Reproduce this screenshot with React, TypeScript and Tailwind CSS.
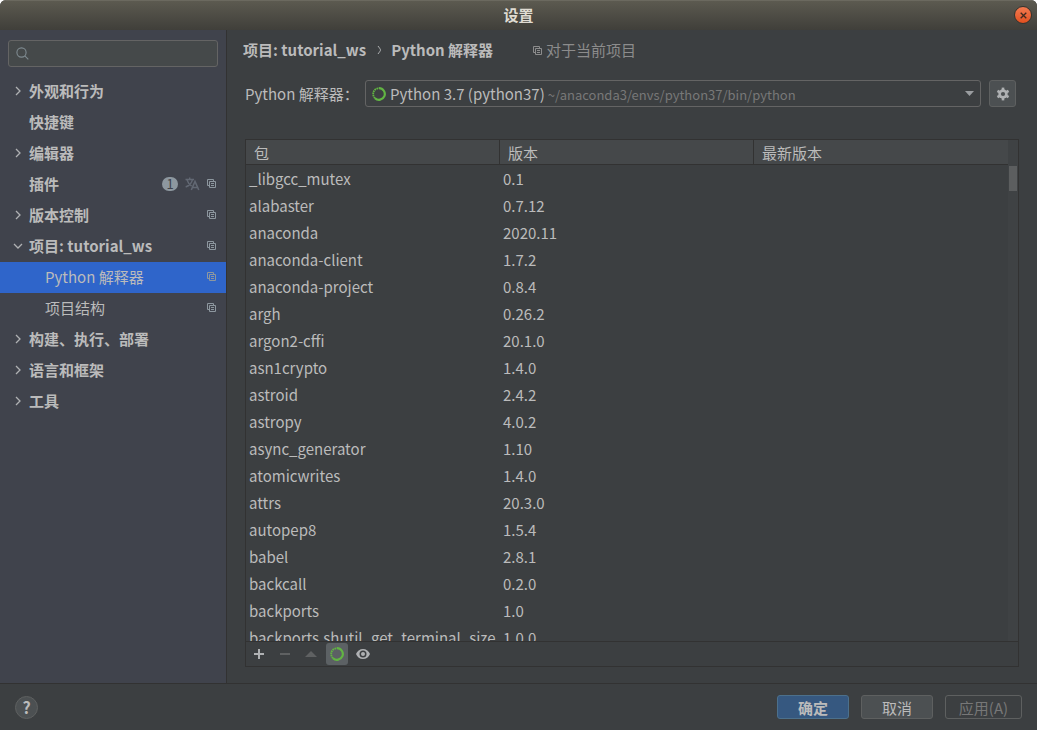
import React from "react";

type NavItem = {
  label: string;
  state?: "closed" | "open";
  child?: boolean;
  scoped?: boolean;
  selected?: boolean;
  plugin?: boolean;
};

const navItems: NavItem[] = [
  { label: "外观和行为", state: "closed" },
  { label: "快捷键" },
  { label: "编辑器", state: "closed" },
  { label: "插件", scoped: true, plugin: true },
  { label: "版本控制", state: "closed", scoped: true },
  { label: "项目: tutorial_ws", state: "open", scoped: true },
  { label: "Python 解释器", child: true, scoped: true, selected: true },
  { label: "项目结构", child: true, scoped: true },
  { label: "构建、执行、部署", state: "closed" },
  { label: "语言和框架", state: "closed" },
  { label: "工具", state: "closed" },
];

const packages: [string, string][] = [
  ["_libgcc_mutex", "0.1"],
  ["alabaster", "0.7.12"],
  ["anaconda", "2020.11"],
  ["anaconda-client", "1.7.2"],
  ["anaconda-project", "0.8.4"],
  ["argh", "0.26.2"],
  ["argon2-cffi", "20.1.0"],
  ["asn1crypto", "1.4.0"],
  ["astroid", "2.4.2"],
  ["astropy", "4.0.2"],
  ["async_generator", "1.10"],
  ["atomicwrites", "1.4.0"],
  ["attrs", "20.3.0"],
  ["autopep8", "1.5.4"],
  ["babel", "2.8.1"],
  ["backcall", "0.2.0"],
  ["backports", "1.0"],
  ["backports.shutil_get_terminal_size", "1.0.0"],
];

function ScopeIcon() {
  return (
    <svg width="9" height="9" viewBox="0 0 9 9" fill="none" stroke="currentColor" className="shrink-0" aria-hidden="true">
      <path d="M2 6.5H0.5V0.5H6.5V2" />
      <path d="M2.5 2.5H8.5V8.5H2.5Z" />
      <path d="M4 4.5H7M4 6.5H7" />
    </svg>
  );
}

function Chevron({ open }: { open?: boolean }) {
  return (
    <svg width="10" height="10" viewBox="0 0 10 10" fill="none" stroke="#afb1b3" strokeWidth="1.3" aria-hidden="true">
      {open ? <path d="M1 3L5 7L9 3" /> : <path d="M3 1L7 5L3 9" />}
    </svg>
  );
}

function TranslateIcon() {
  return (
    <svg width="15" height="14" viewBox="0 0 15 14" fill="none" stroke="#626873" strokeWidth="1.4" aria-hidden="true">
      <path d="M0.5 2.5H9M4.7 0.5V2.5M7.5 2.5C6.7 6 4 8.8 0.7 10M2 2.7C3 6 4.6 8 6.6 9.2" />
      <path d="M6.3 13L10 4.5L13.8 13M7.6 10.5H12.4" strokeWidth="1.6" />
    </svg>
  );
}

function CondaIcon() {
  return (
    <svg width="14" height="14" viewBox="0 0 14 14" fill="none" stroke="#62b543" className="shrink-0" aria-hidden="true">
      <path d="M7 1.2A5.8 5.8 0 1 1 3 11.2" strokeWidth="2.2" />
      <path d="M3 11.2A5.8 5.8 0 0 1 7 1.2" strokeWidth="1.8" strokeDasharray="1.6 0.6" />
    </svg>
  );
}

function GearIcon() {
  return (
    <svg width="14" height="14" viewBox="0 0 14 14" aria-hidden="true">
      <g fill="#afb1b3">
        <path d="M5.7 0.6H8.3V13.4H5.7Z" />
        <path d="M5.7 0.6H8.3V13.4H5.7Z" transform="rotate(60 7 7)" />
        <path d="M5.7 0.6H8.3V13.4H5.7Z" transform="rotate(120 7 7)" />
        <circle cx="7" cy="7" r="4.7" />
      </g>
      <circle cx="7" cy="7" r="2.1" fill="#4c5052" />
    </svg>
  );
}

function EyeIcon() {
  return (
    <svg width="14" height="10" viewBox="0 0 14 10" aria-hidden="true">
      <path d="M7 0C3.8 0 1.2 2 0 5C1.2 8 3.8 10 7 10S12.8 8 14 5C12.8 2 10.2 0 7 0Z" fill="#afb1b3" />
      <circle cx="7" cy="5" r="3.5" fill="#3c3f41" />
      <circle cx="7" cy="5" r="2" fill="#afb1b3" />
    </svg>
  );
}

function Sidebar() {
  return (
    <aside className="flex w-[227px] shrink-0 flex-col border-r border-[#323232] bg-[#40434c]">
      <label className="mx-2 mt-[10px] mb-[9px] flex h-[27px] items-center gap-2 rounded-[3px] border border-[#646464] bg-[#45494a] px-[7px]">
        <svg width="13" height="13" viewBox="0 0 13 13" fill="none" stroke="#7f8b91" strokeWidth="1.1" aria-hidden="true">
          <circle cx="5.5" cy="5.5" r="4.6" />
          <path d="M8.8 8.8L12.3 12.3" />
        </svg>
        <input type="search" aria-label="搜索" className="min-w-0 flex-1 bg-transparent outline-none" />
      </label>
      <nav>
        <ul>
          {navItems.map((item) => (
            <li key={item.label}>
              <button
                type="button"
                className={
                  "flex h-[31px] w-full items-center pr-[10px] pb-[2px] text-left " +
                  (item.child ? "pl-[45px] " : "pl-[13px] font-bold ") +
                  (item.selected ? "bg-[#2f65ca]" : "")
                }
              >
                {!item.child && (
                  <span className="w-4 shrink-0">{item.state && <Chevron open={item.state === "open"} />}</span>
                )}
                <span className="flex-1">{item.label}</span>
                <span className="flex items-center gap-[7px] text-[#8d979f]">
                  {item.plugin && (
                    <>
                      <span className="flex h-[14px] w-4 items-center justify-center rounded-full bg-[#8d979f] text-[13px] font-normal text-[#40434c]">
                        1
                      </span>
                      <TranslateIcon />
                    </>
                  )}
                  {item.scoped && <ScopeIcon />}
                </span>
              </button>
            </li>
          ))}
        </ul>
      </nav>
    </aside>
  );
}

function PackageTable() {
  return (
    <section className="flex min-h-0 flex-1 flex-col border border-[#323232]">
      <div className="flex min-h-0 flex-1 overflow-hidden">
        <div className="min-w-0 flex-1 overflow-hidden">
          <table className="w-full table-fixed border-separate border-spacing-0 text-left">
            <thead className="bg-[#45484a]">
              <tr className="h-[25px]">
                {["包", "版本", "最新版本"].map((title) => (
                  <th
                    key={title}
                    className="border-r border-b border-[#323232] p-0 pt-[2px] pl-2 font-normal last:border-r-0"
                  >
                    {title}
                  </th>
                ))}
              </tr>
            </thead>
            <tbody>
              {packages.map(([name, version]) => (
                <tr key={name} className="h-[27px]">
                  <td className="p-0 pl-[3px] whitespace-nowrap">{name}</td>
                  <td className="p-0 pl-[3px]">{version}</td>
                  <td className="p-0" />
                </tr>
              ))}
            </tbody>
          </table>
        </div>
        <div className="w-[10px] bg-[#3f4244] pt-[26px]">
          <div className="ml-px h-[25px] w-2 bg-[#5c5e5f]" />
        </div>
      </div>
      <div className="flex h-[25px] shrink-0 items-center gap-1 border-t border-[#323232] pl-[2px]">
        <button type="button" aria-label="安装" className="flex h-[22px] w-[22px] items-center justify-center">
          <svg width="10" height="10" viewBox="0 0 10 10" stroke="#afb1b3" strokeWidth="2" aria-hidden="true">
            <path d="M5 0V10M0 5H10" />
          </svg>
        </button>
        <button type="button" aria-label="卸载" disabled className="flex h-[22px] w-[22px] items-center justify-center">
          <svg width="10" height="10" viewBox="0 0 10 10" stroke="#5f6162" strokeWidth="2" aria-hidden="true">
            <path d="M0 5H10" />
          </svg>
        </button>
        <button type="button" aria-label="升级" disabled className="flex h-[22px] w-[22px] items-center justify-center">
          <svg width="12" height="6" viewBox="0 0 12 6" fill="#5f6162" aria-hidden="true">
            <path d="M6 0L12 6H0Z" />
          </svg>
        </button>
        <button
          type="button"
          aria-label="使用 Conda"
          aria-pressed="true"
          className="flex h-[22px] w-[22px] items-center justify-center rounded-[3px] bg-[#5c6164]"
        >
          <CondaIcon />
        </button>
        <button type="button" aria-label="显示早期版本" className="flex h-[22px] w-[22px] items-center justify-center">
          <EyeIcon />
        </button>
      </div>
    </section>
  );
}

export default function App() {
  return (
    <div className="flex h-screen flex-col overflow-hidden rounded-t-md bg-[#3c3f41] font-['Noto_Sans_CJK_SC',sans-serif] text-[15px] leading-5 text-[#bbbbbb]">
      <header className="grid h-[30px] shrink-0 grid-cols-[1fr_auto_1fr] items-center border-t border-[#6b695f] bg-linear-to-b from-[#5c5a50] to-[#403f3a] px-[5px] pb-px">
        <h1 className="col-start-2 font-bold text-[#dfdbd2]">设置</h1>
        <button
          type="button"
          aria-label="关闭"
          className="flex h-[18px] w-[18px] items-center justify-center justify-self-end rounded-full border border-[#35332e] bg-linear-to-b from-[#f27a50] to-[#e2501d]"
        >
          <svg width="7" height="7" viewBox="0 0 7 7" stroke="#3e2a20" strokeWidth="1.3" aria-hidden="true">
            <path d="M0.7 0.7L6.3 6.3M6.3 0.7L0.7 6.3" />
          </svg>
        </button>
      </header>

      <div className="flex min-h-0 flex-1">
        <Sidebar />
        <main className="flex min-w-0 flex-1 flex-col pt-[10px] pr-[18px] pb-4 pl-[18px]">
          <div className="-ml-[2px] flex items-center">
            <a href="#project" className="font-bold">
              项目: tutorial_ws
            </a>
            <svg width="6" height="10" viewBox="0 0 6 10" fill="none" stroke="#afb1b3" className="mr-2 ml-[11px]" aria-hidden="true">
              <path d="M1 1C2 2.5 3.5 4 3.5 5S2 7.5 1 9" />
            </svg>
            <h2 className="font-bold">Python 解释器</h2>
            <span className="ml-10 flex items-center gap-1 text-[#8c8c8c]">
              <ScopeIcon />
              对于当前项目
            </span>
          </div>

          <div className="mt-5 mb-8 flex items-center pr-[3px]">
            <label htmlFor="interpreter" className="w-[120px] shrink-0 whitespace-nowrap">
              Python 解释器：
            </label>
            <div className="mr-2 flex h-[27px] min-w-0 flex-1 items-center rounded-[3px] border border-[#646464] px-[6px]">
              <CondaIcon />
              <select
                id="interpreter"
                className="ml-1 appearance-none bg-transparent outline-none [field-sizing:content]"
                defaultValue="python37"
              >
                <option value="python37">Python 3.7 (python37)</option>
              </select>
              <span className="ml-[3px] min-w-0 flex-1 truncate pt-[2px] text-[13px] text-[#787878]">
                ~/anaconda3/envs/python37/bin/python
              </span>
              <svg width="9" height="5" viewBox="0 0 9 5" fill="#9a9da0" aria-hidden="true">
                <path d="M0 0H9L4.5 5Z" />
              </svg>
            </div>
            <button
              type="button"
              aria-label="解释器设置"
              className="flex h-[27px] w-[27px] items-center justify-center rounded-[3px] border border-[#5e6060] bg-[#4c5052]"
            >
              <GearIcon />
            </button>
          </div>

          <PackageTable />
        </main>
      </div>

      <footer className="flex h-[47px] shrink-0 items-center border-t border-[#323232] px-[15px]">
        <button
          type="button"
          aria-label="帮助"
          className="flex h-[23px] w-[23px] items-center justify-center rounded-full border border-[#5e6060] bg-[#4c5052] text-base font-bold"
        >
          ?
        </button>
        <div className="ml-auto flex gap-3">
          <button type="button" className="h-6 w-[72px] rounded-[3px] border border-[#4c708c] bg-[#365880] pt-[2px] font-bold">
            确定
          </button>
          <button type="button" className="h-6 w-[72px] rounded-[3px] border border-[#5e6060] bg-[#4c5052] pt-[2px]">
            取消
          </button>
          <button type="button" disabled className="h-6 w-[77px] rounded-[3px] border border-[#5e6060] pt-[2px] text-[#777777]">
            应用(A)
          </button>
        </div>
      </footer>
    </div>
  );
}
